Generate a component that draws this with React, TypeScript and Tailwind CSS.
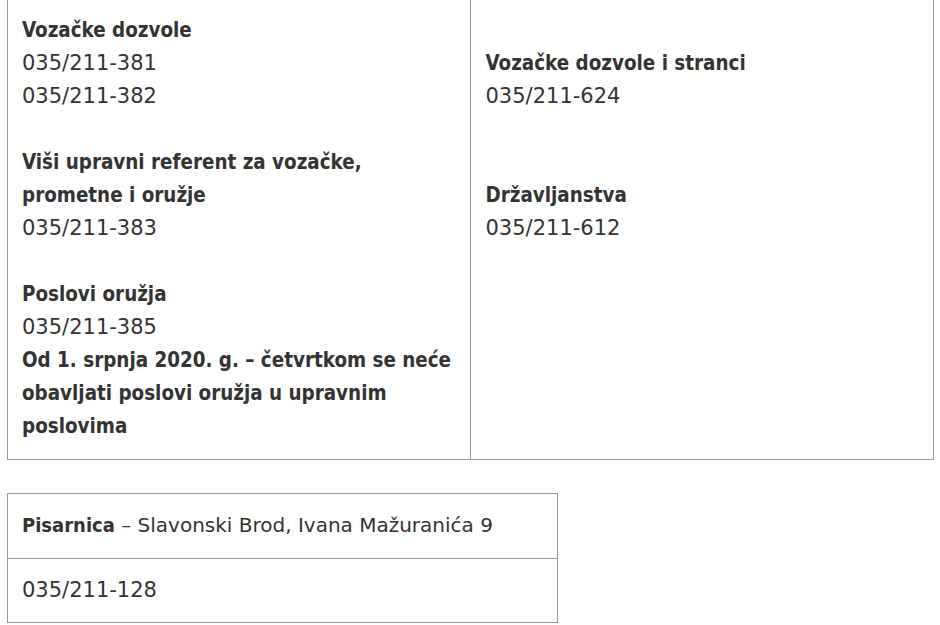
import React from "react";

const head = "font-bold text-[20.4px] [font-family:'DejaVu_Sans_Condensed','DejaVu_Sans',sans-serif] [font-stretch:condensed]";
const num = "text-[21px] [font-family:'DejaVu_Sans',sans-serif]";

function Blank() {
  return <div className="h-[33px]" />;
}

export default function App() {
  return (
    <div className="bg-white w-[940px] h-[625px] overflow-hidden pl-[7px] text-[#333] leading-[33px]">
      <div className="w-[927px] grid grid-cols-2 border-x border-b border-[#999]">
        <div className="pl-[14px] pt-[14px] pb-[16px] border-r border-[#999]">
          <div className={head}>Vozačke dozvole</div>
          <div className={num}>035/211-381</div>
          <div className={num}>035/211-382</div>
          <Blank />
          <div className={head}>Viši upravni referent za vozačke,<br />prometne i oružje</div>
          <div className={num}>035/211-383</div>
          <Blank />
          <div className={head}>Poslovi oružja</div>
          <div className={num}>035/211-385</div>
          <div className={head}>
            Od 1. srpnja 2020. g. – četvrtkom se neće
            <br />
            obavljati poslovi oružja u upravnim
            <br />
            poslovima
          </div>
        </div>
        <div className="pl-[15px] pt-[14px]">
          <Blank />
          <div className={head}>Vozačke dozvole i stranci</div>
          <div className={num}>035/211-624</div>
          <Blank />
          <Blank />
          <div className={head}>Državljanstva</div>
          <div className={num}>035/211-612</div>
        </div>
      </div>
      <div className="mt-[33px] w-[551px] border border-[#999]">
        <div className="pl-[14px] py-[15px] border-b border-[#999] whitespace-nowrap">
          <span className="font-bold text-[20px] [font-family:'DejaVu_Sans_Condensed','DejaVu_Sans',sans-serif] [font-stretch:condensed]">Pisarnica</span>
          <span className="text-[20px] [font-family:'DejaVu_Sans',sans-serif]"> – Slavonski Brod, Ivana Mažuranića 9</span>
        </div>
        <div className="pl-[14px] py-[15px]">
          <div className={num}>035/211-128</div>
        </div>
      </div>
    </div>
  );
}
